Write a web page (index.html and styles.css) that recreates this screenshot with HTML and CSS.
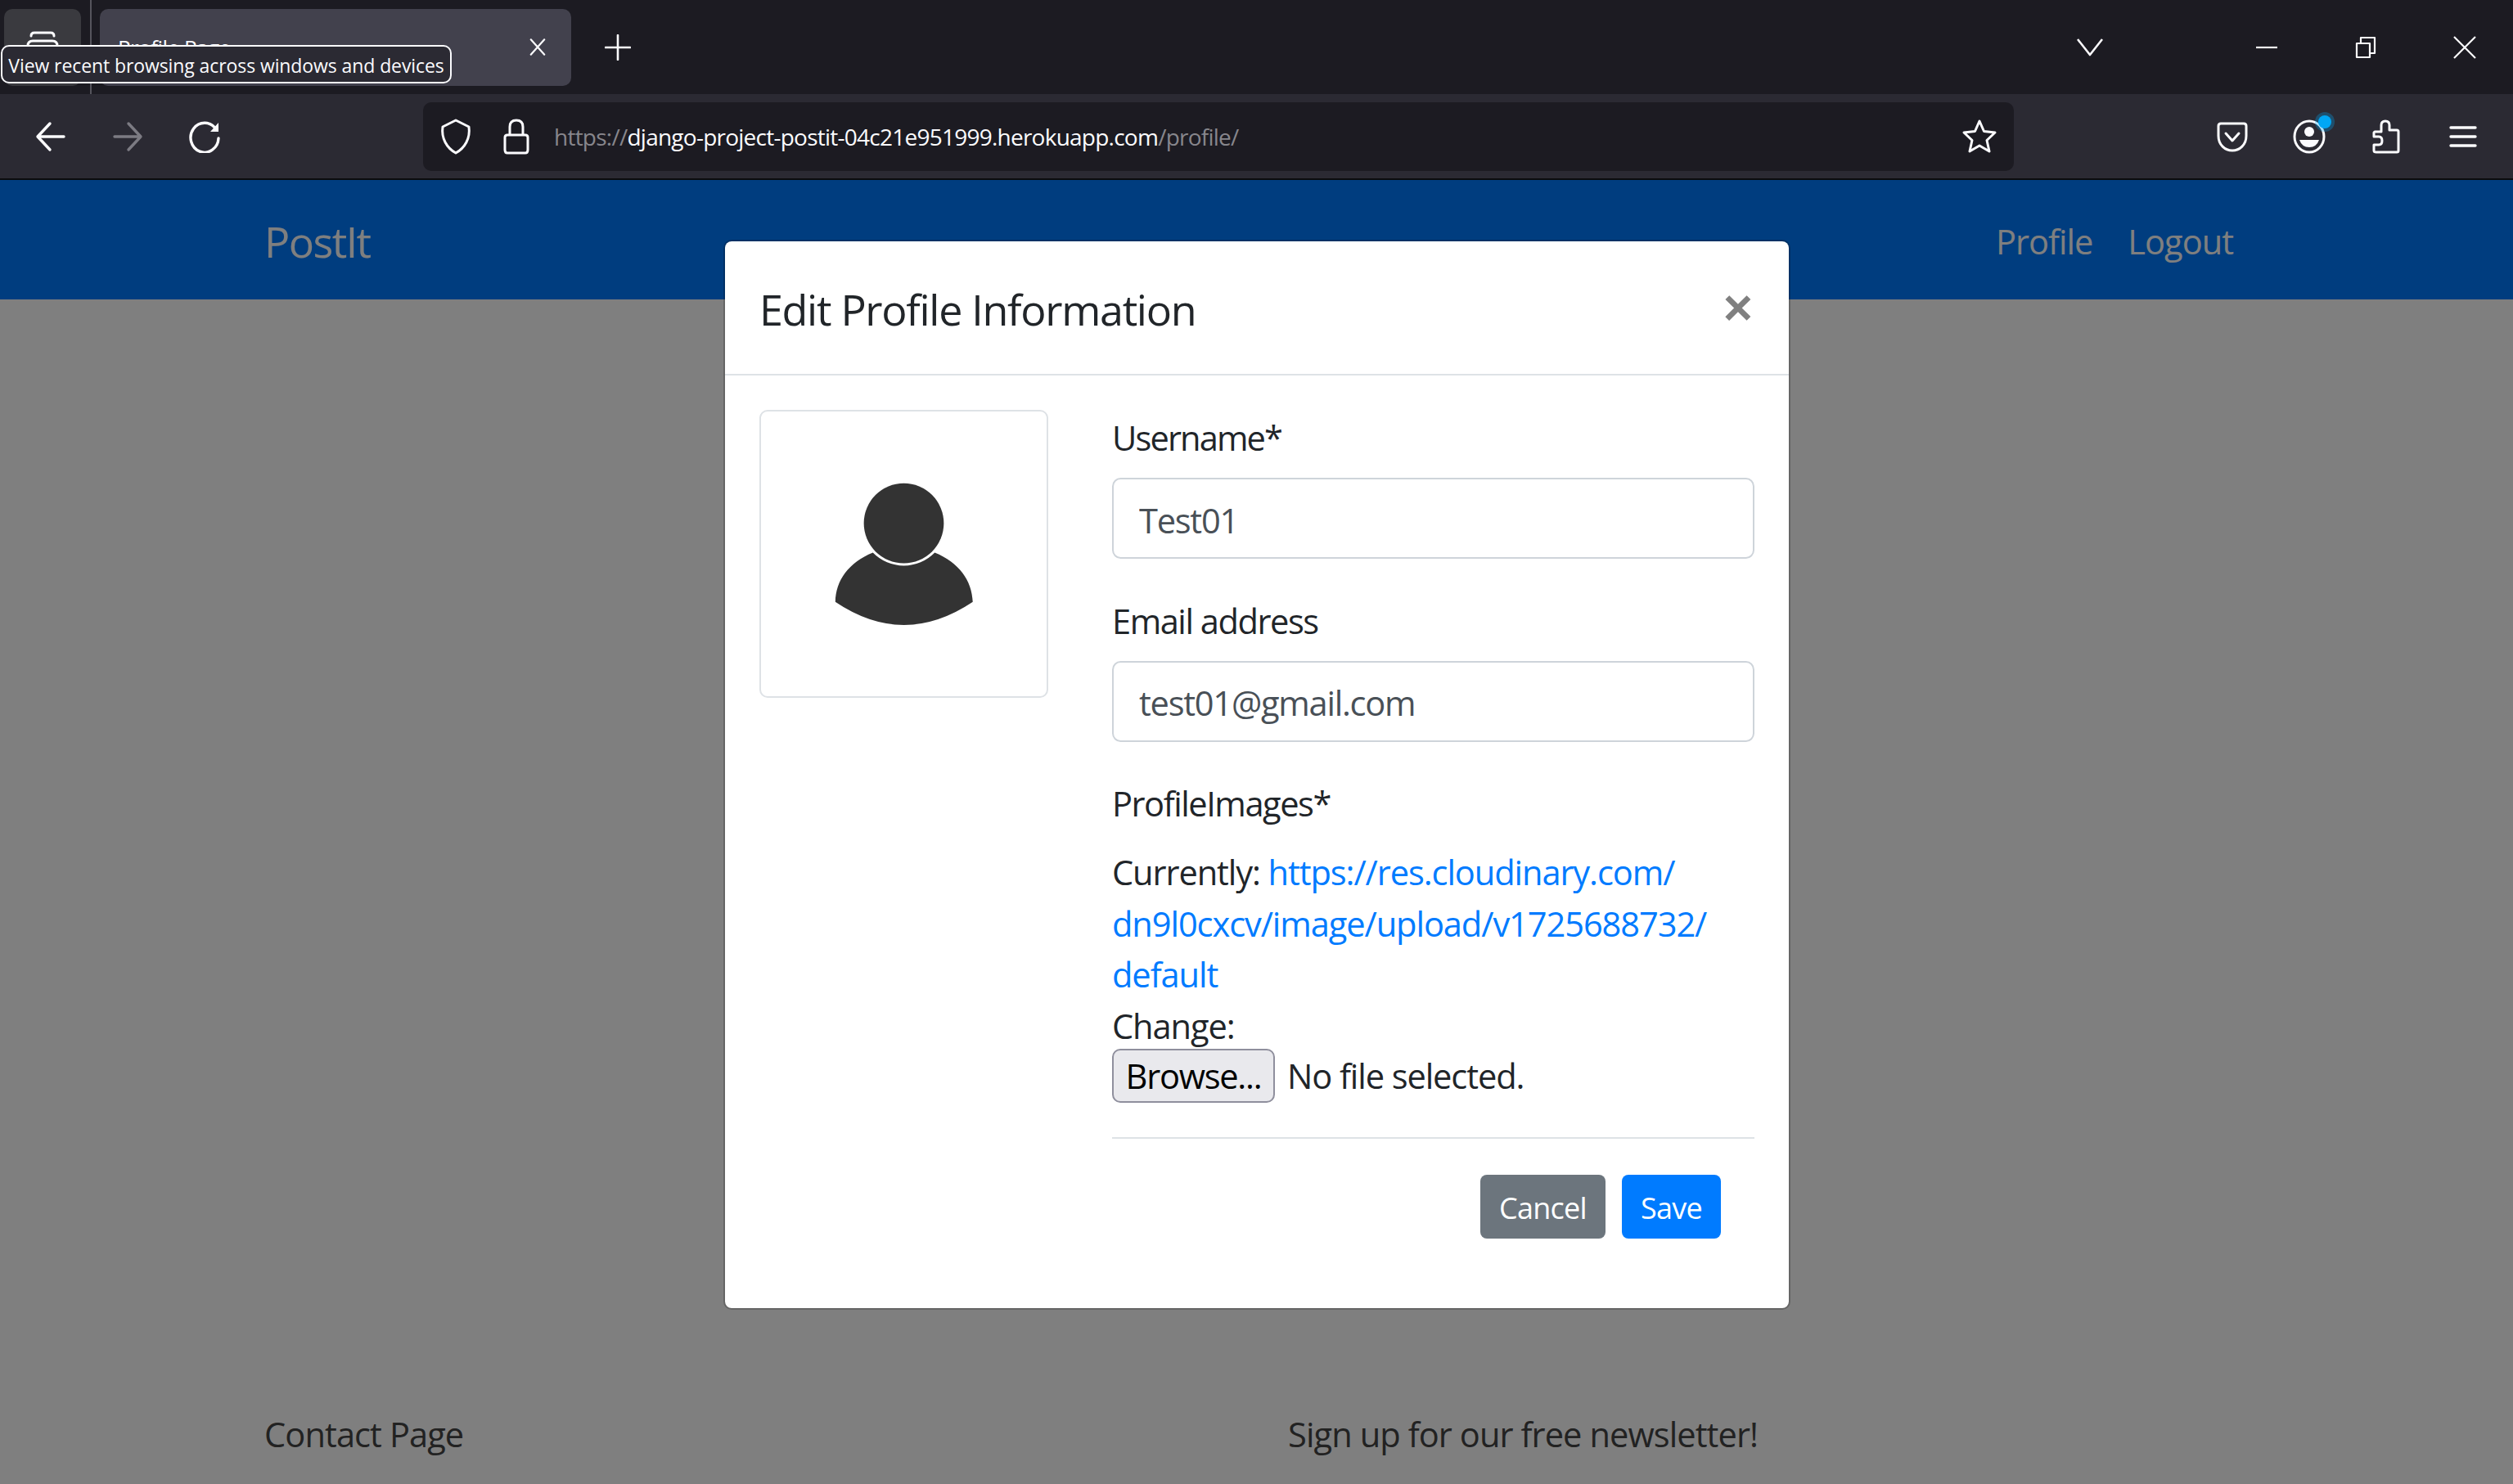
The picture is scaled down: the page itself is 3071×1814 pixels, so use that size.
FILE: index.html
```html
<!DOCTYPE html>
<html lang="en">
<head>
    <meta charset="UTF-8">
    <title>Profile Page</title>
    <link rel="stylesheet" href="styles.css">
</head>
<body>
    <div class="tabbar">
        <div class="view-btn">
            <svg class="icon" viewBox="0 0 44 44"><path d="M8 8Q8 4 12 4H32Q36 4 36 8M4 20Q4 14 10 14H34Q40 14 40 20V34Q40 40 34 40H10Q4 40 4 34Z"/></svg>
        </div>
        <div class="tab-sep"></div>
        <div class="tab">
            <span class="tab-title">Profile Page</span>
            <svg class="tab-close" viewBox="0 0 24 24"><path d="M3 2L21 22M21 2L3 22"/></svg>
        </div>
        <svg class="new-tab" viewBox="0 0 32 32"><path d="M16 1V31M1 16H31"/></svg>
        <div class="tabbar-right">
            <svg class="tabs-down" viewBox="0 0 32 24"><path d="M1 2L16 21L31 2"/></svg>
            <svg class="win-btn" viewBox="0 0 28 28"><path d="M1 14H27"/></svg>
            <svg class="win-btn" viewBox="0 0 28 28"><path d="M3 9H19V26H3ZM8 9V2H25V21H19"/></svg>
            <svg class="win-btn" viewBox="0 0 28 28"><path d="M1 1L27 27M27 1L1 27"/></svg>
        </div>
        <div class="tooltip">View recent browsing across windows and devices</div>
    </div>

    <div class="toolbar">
        <div class="nav-btn"><svg class="icon" viewBox="0 0 40 40"><path d="M36 20H4M19 4L4 20L19 36"/></svg></div>
        <div class="nav-btn off"><svg class="icon" viewBox="0 0 40 40"><path d="M4 20H36M21 4L36 20L21 36"/></svg></div>
        <div class="nav-btn"><svg class="icon" viewBox="0 0 40 40"><path d="M34 11A17 18 0 1 0 37 22"/><path class="solid" d="M27 14L37 3V14Z"/></svg></div>
        <div class="urlbar">
            <svg class="url-icon" viewBox="0 0 40 44"><path d="M20 2L36 10C38 24 31 36 20 42C9 36 2 24 4 10Z"/></svg>
            <svg class="url-icon lock" viewBox="0 0 40 44"><path d="M12 20V10Q12 2 20 2Q28 2 28 10V20M6 23Q6 20 9 20H31Q34 20 34 23V38Q34 42 31 42H9Q6 42 6 38Z"/></svg>
            <div class="url-text">https://<b>django-project-postit-04c21e951999.herokuapp.com</b>/profile/</div>
            <svg class="url-icon star" viewBox="0 0 44 44"><path d="M22 3L27.5 15.5L41 17L31 26.5L34 40L22 33L10 40L13 26.5L3 17L16.5 15.5Z"/></svg>
        </div>
        <div class="tool-btns">
            <div class="tool-btn"><svg class="icon" viewBox="0 0 40 44"><path d="M3 9Q3 6 6 6H34Q37 6 37 9V21C37 32 29 39 20 39C11 39 3 32 3 21Z"/><path d="M12 18L20 27L28 18"/></svg></div>
            <div class="tool-btn">
                <svg class="icon" viewBox="0 0 40 44"><ellipse cx="20" cy="22" rx="18" ry="19"/><circle class="solid" cx="20" cy="16" r="6"/><path class="solid" d="M8 26H32Q29 35 20 35Q11 35 8 26Z"/></svg>
                <span class="dot"></span>
            </div>
            <div class="tool-btn"><svg class="icon" viewBox="0 0 40 44"><path d="M6 16H14V8Q14 3 19 3Q24 3 24 8V14H33Q35 14 35 16V39Q35 41 33 41H8Q5 41 5 39V32H11Q15 32 15 27Q15 22 11 22H5V17Z"/></svg></div>
            <div class="tool-btn"><svg class="icon menu" viewBox="0 0 40 44"><path d="M5 11H35M5 22H35M5 33H35"/></svg></div>
        </div>
    </div>
    <div class="toolbar-line"></div>

    <div class="page">
        <nav class="navbar">
            <a class="brand">PostIt</a>
            <div class="nav-links">
                <a>Profile</a>
                <a>Logout</a>
            </div>
        </nav>
        <main class="content"></main>
        <footer class="footer">
            <div class="foot-col">Contact Page</div>
            <div class="foot-col">Sign up for our free newsletter!</div>
        </footer>

        <div class="backdrop"></div>

        <div class="modal">
            <div class="modal-header">
                <h5 class="modal-title">Edit Profile Information</h5>
                <span class="close">×</span>
            </div>
            <div class="modal-body">
                <div class="avatar">
                    <svg viewBox="-1 -1 348 348"><circle cx="173.5" cy="136" r="49"/><path d="M135.6 172A53 53 0 0 0 211.4 172C241 184 257 206 258 232.5Q173.5 289 89.6 232.5C90 206 106 184 135.6 172Z"/></svg>
                </div>
                <form class="profile-form">
                    <div class="form-group">
                        <label class="label-user">Username*</label>
                        <input class="form-control" type="text" value="Test01">
                    </div>
                    <div class="form-group">
                        <label>Email address</label>
                        <input class="form-control" type="email" value="test01@gmail.com">
                    </div>
                    <div class="form-group">
                        <label>ProfileImages*</label>
                        <div class="file-info">Currently: <a class="link">https://res.cloudinary.com/<br>dn9l0cxcv/image/upload/v1725688732/<br>default</a></div>
                        <div>Change:</div>
                        <div class="file-row"><button type="button" class="browse">Browse...</button><span>No file selected.</span></div>
                    </div>
                    <hr class="rule">
                    <div class="form-actions">
                        <button type="button" class="btn btn-cancel">Cancel</button>
                        <button type="button" class="btn btn-save">Save</button>
                    </div>
                </form>
            </div>
        </div>
    </div>
</body>
</html>
```

FILE: styles.css
```css
* {
    box-sizing: border-box;
}
html, body {
    height: 100%;
}
body {
    margin: 0;
    display: flex;
    flex-direction: column;
    overflow: hidden;
    font-family: "Open Sans", "Noto Sans", sans-serif;
    color: #212529;
    background: #fff;
}
svg {
    display: block;
    flex: none;
    fill: none;
    stroke: #fbfbfe;
    stroke-linecap: round;
    stroke-linejoin: round;
}
svg .solid {
    fill: #fbfbfe;
    stroke: none;
}

/* browser tabs */
.tabbar {
    position: relative;
    flex: none;
    height: 115px;
    display: flex;
    align-items: center;
    padding-left: 5px;
    background: #1c1b22;
}
.view-btn {
    width: 94px;
    height: 94px;
    display: flex;
    justify-content: center;
    align-items: center;
    border-radius: 10px;
    background: #3a3a3f;
}
.icon {
    width: 44px;
    height: 44px;
    stroke-width: 3;
}
.menu {
    stroke-width: 3.4;
}
.tab-sep {
    width: 2px;
    height: 115px;
    margin: 0 10px 0 11px;
    background: #55545c;
}
.tab {
    width: 576px;
    height: 94px;
    display: flex;
    justify-content: space-between;
    align-items: center;
    padding: 0 24px 0 22px;
    border-radius: 10px;
    background: #42414d;
    color: #fbfbfe;
    font-size: 26px;
    letter-spacing: -0.02em;
}
.tab-close {
    width: 22px;
    height: 25px;
    stroke-width: 2.4;
    margin-right: 6px;
}
.new-tab {
    width: 32px;
    height: 32px;
    margin-left: 41px;
    stroke-width: 2.6;
}
.tabbar-right {
    margin-left: auto;
    display: flex;
    align-items: center;
}
.tabs-down {
    width: 32px;
    height: 24px;
    margin-right: 186px;
    stroke-width: 2.6;
    stroke-linecap: butt;
}
.win-btn {
    width: 28px;
    height: 28px;
    stroke-width: 2.2;
    stroke-linecap: butt;
    margin-right: 93px;
}
.win-btn:last-child {
    margin-right: 45px;
}
.tooltip {
    position: absolute;
    left: 1px;
    top: 55px;
    width: 551px;
    height: 47px;
    display: flex;
    align-items: center;
    justify-content: center;
    padding-top: 2px;
    border: 2px solid #fbfbfe;
    border-radius: 10px;
    background: #2b2a33;
    color: #fbfbfe;
    font-size: 23px;
    letter-spacing: -0.004em;
    white-space: nowrap;
}

/* address bar row */
.toolbar {
    flex: none;
    height: 103px;
    display: flex;
    align-items: center;
    padding-left: 15px;
    background: #2b2a33;
}
.nav-btn {
    flex: none;
    width: 94px;
    display: flex;
    justify-content: center;
}
.nav-btn .icon {
    width: 40px;
    height: 40px;
    stroke-width: 3.4;
}
.nav-btn.off .icon {
    stroke: #7c7b83;
}
.urlbar {
    flex: none;
    width: 1944px;
    height: 84px;
    margin-left: 220px;
    display: flex;
    align-items: center;
    padding: 0 20px;
    border-radius: 10px;
    background: #1c1b22;
}
.url-icon {
    width: 40px;
    height: 44px;
    stroke-width: 3;
}
.url-icon.lock {
    margin-left: 34px;
}
.url-icon.star {
    width: 44px;
}
.url-text {
    flex: 1;
    margin-left: 26px;
    font-size: 28px;
    letter-spacing: -0.027em;
    color: #87868c;
    white-space: nowrap;
}
.url-text b {
    font-weight: 400;
    color: #fbfbfe;
}
.tool-btns {
    flex: none;
    display: flex;
    margin-left: 220px;
}
.tool-btn {
    position: relative;
    flex: none;
    width: 94px;
    display: flex;
    justify-content: center;
}
.dot {
    position: absolute;
    left: 58px;
    top: -4px;
    width: 16px;
    height: 16px;
    border-radius: 50%;
    background: #00a7f5;
    box-shadow: 0 0 0 4px rgba(0, 167, 245, 0.3);
}
.toolbar-line {
    flex: none;
    height: 2px;
    background: #0c0c0d;
}

/* page under the dialog */
.page {
    position: relative;
    flex: 1;
    display: flex;
    flex-direction: column;
    overflow: hidden;
    font-size: 41.6px;
    line-height: 1.5;
    letter-spacing: -0.022em;
}
.navbar {
    flex: none;
    height: 146px;
    display: flex;
    justify-content: space-between;
    align-items: center;
    padding: 4px 342px 0 323px;
    background: #007bff;
    color: #fff;
}
.brand {
    font-size: 52px;
    letter-spacing: -0.03em;
}
.nav-links {
    display: flex;
    gap: 43px;
    letter-spacing: -0.024em;
}
.content {
    flex: 1;
}
.footer {
    flex: none;
    display: flex;
    height: 92px;
    padding-left: 323px;
    color: #444;
}
.foot-col:first-child {
    width: 1251px;
}
.backdrop {
    position: absolute;
    top: 0;
    left: 0;
    right: 0;
    bottom: 0;
    background: rgba(0, 0, 0, 0.5);
}

/* edit profile dialog */
.modal {
    position: absolute;
    top: 73px;
    left: 884px;
    width: 1304px;
    height: 1308px;
    border: 2px solid rgba(0, 0, 0, 0.2);
    border-radius: 10px;
    background-clip: padding-box;
    background-color: #fff;
}
.modal-header {
    height: 164px;
    display: flex;
    justify-content: space-between;
    align-items: center;
    padding: 0 43px 0 42px;
    border-bottom: 2.6px solid #dee2e6;
}
.modal-title {
    margin: 0;
    padding-top: 3px;
    font-size: 52px;
    font-weight: 400;
    line-height: 1.5;
    letter-spacing: -0.025em;
}
.close {
    margin-right: 2px;
    font-family: "Liberation Sans", sans-serif;
    font-size: 62px;
    font-weight: 700;
    color: #808080;
    line-height: 1;
}
.modal-body {
    display: flex;
    gap: 78px;
    padding: 42px;
}
.avatar {
    flex: none;
    width: 353px;
    height: 352px;
    border: 2.6px solid #dee2e6;
    border-radius: 10px;
}
.avatar svg {
    width: 348px;
    height: 347px;
    stroke: none;
    fill: #333;
}
.profile-form {
    flex: 1;
}
.form-group {
    margin-bottom: 41.6px;
    letter-spacing: -0.026em;
}
label {
    display: block;
    padding-top: 3px;
    margin-bottom: 17.8px;
    letter-spacing: -0.035em;
}
.label-user {
    letter-spacing: -0.045em;
}
.form-control {
    display: block;
    width: 100%;
    height: 98.8px;
    padding: 4px 31px 0;
    border: 2.6px solid #ced4da;
    border-radius: 10.4px;
    font-family: inherit;
    font-size: 41.6px;
    letter-spacing: -0.03em;
    color: #495057;
}
.file-info {
    padding-top: 4px;
}
.link {
    color: #007bff;
}
.file-row {
    display: flex;
    align-items: center;
    gap: 15px;
    margin-top: -3px;
}
.browse {
    width: 199px;
    height: 66px;
    padding: 0;
    border: 2.6px solid #8f8f9d;
    border-radius: 10px;
    background: #e9e9ed;
    color: #000;
    font-family: inherit;
    font-size: 41.6px;
    letter-spacing: -0.03em;
}
.rule {
    margin: 0;
    border: 0;
    border-top: 2.6px solid #dee2e6;
}
.form-actions {
    display: flex;
    justify-content: flex-end;
    gap: 20px;
    margin-top: 44px;
    padding-right: 41px;
}
.btn {
    height: 78px;
    padding: 3px 0 0;
    border: 0;
    border-radius: 8px;
    color: #fff;
    font-family: inherit;
    font-size: 36px;
    letter-spacing: -0.02em;
}
.btn-cancel {
    width: 153px;
    background: #6c757d;
}
.btn-save {
    width: 121px;
    background: #007bff;
}
```
